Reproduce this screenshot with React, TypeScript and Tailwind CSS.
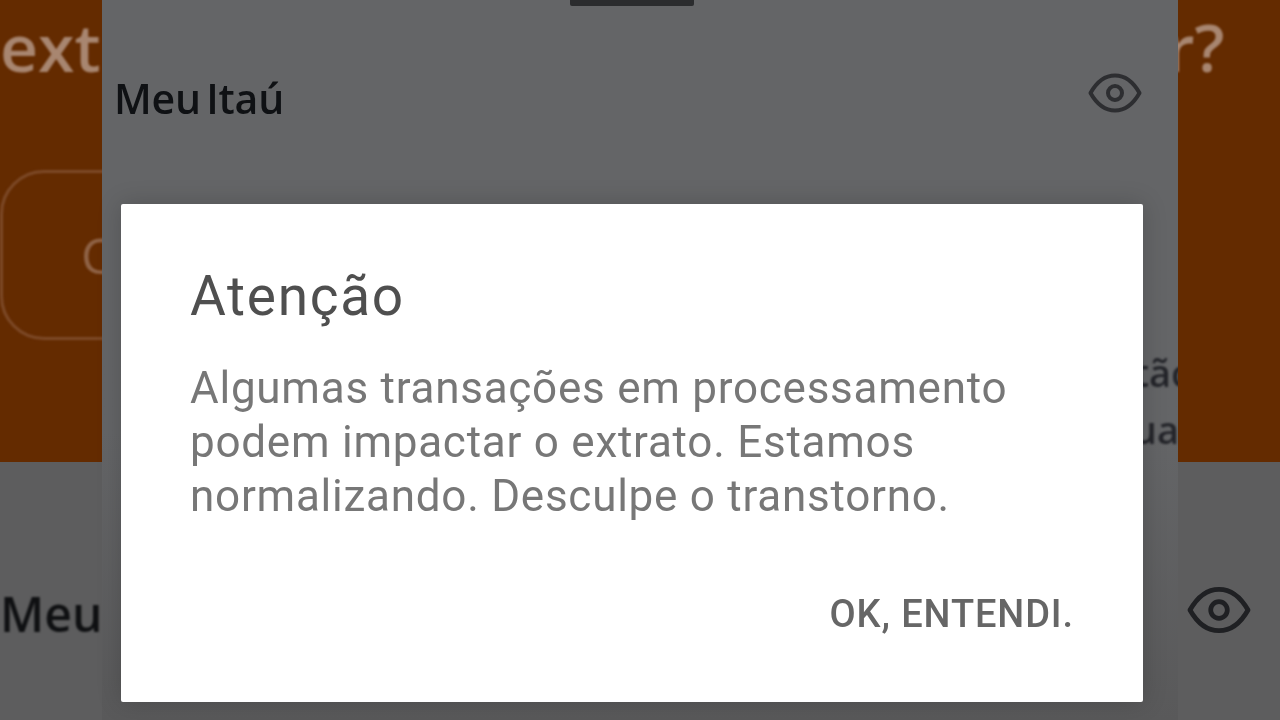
const roboto = "font-['Roboto',sans-serif]";
const openSans = "font-['Open_Sans',sans-serif]";

function EyeIcon({ className }: { className: string }) {
  return (
    <svg className={className} viewBox="0 0 54 40" fill="none" stroke="currentColor" strokeWidth="4">
      <path d="M2.500 20C9 8.500 17.500 2.500 27 2.500S45 8.500 51.500 20C45 31.500 36.500 37.500 27 37.500S9 31.500 2.500 20Z" strokeLinejoin="round" />
      <circle cx="27" cy="20" r="7" />
    </svg>
  );
}

export default function App() {
  return (
    <div className={`relative flex h-[720px] w-[1280px] overflow-hidden bg-[#5d5d5e] ${openSans}`}>
      {/* Left edge of the page behind the sheet */}
      <div className="flex w-[102px] shrink-0 flex-col overflow-hidden">
        <div className="h-[462px] overflow-hidden bg-[#642b00] pt-[8px]">
          <div className="w-[200px] text-[66px] leading-[76px] font-semibold text-[#a88670] blur-[1.2px]">ext</div>
          <div className="mt-[86px] flex h-[170px] w-[300px] items-center rounded-[44px] border-[3px] border-[#7d4a28] pl-[78px] text-[50px] text-[#8f6346] blur-[0.8px]">
            Consultar
          </div>
        </div>
        <div className="flex-1 overflow-hidden pt-[124px]">
          <div className="w-[300px] text-[48px] leading-[56px] font-semibold text-[#0f1012] blur-[0.8px]">Meu Itaú</div>
        </div>
      </div>

      {/* Sheet */}
      <div className="flex w-[1076px] shrink-0 flex-col overflow-hidden bg-gradient-to-b from-[#646567] from-60% to-[#59595a]">
        <div className="ml-[468px] h-[6px] w-[124px] rounded-b-[2px] bg-[#2b2c2e] blur-[0.5px]" />
        <div className="flex items-center justify-between pt-[65px] pr-[36px] pl-[12px]">
          <span className="text-[41px] leading-[54px] font-semibold tracking-[-0.2px] text-[#0f1114] blur-[0.7px] [word-spacing:-5px]">Meu Itaú</span>
          <EyeIcon className="-mt-[10px] h-[40px] w-[54px] text-[#2d2e31] blur-[0.5px]" />
        </div>
        <div className="mt-[226px] flex flex-col items-end gap-[15px] text-[38px] leading-[42px] font-semibold text-[#24252a] blur-[0.8px]">
          <span className="-mr-[12px]">tãc</span>
          <span className="-mr-[1px]">ua</span>
        </div>
      </div>

      {/* Right edge of the page behind the sheet */}
      <div className="flex w-[102px] shrink-0 flex-col overflow-hidden">
        <div className="h-[462px] overflow-hidden bg-[#642b00] pt-[8px]">
          <div className="text-[66px] leading-[76px] font-semibold whitespace-nowrap text-[#a88670] blur-[1.2px]">
            <span className="-ml-[12px]">r?</span>
          </div>
        </div>
        <div className="flex flex-1 justify-start pt-[124px] pl-[9px]">
          <EyeIcon className="h-[48px] w-[64px] text-[#1f2023] blur-[0.5px]" />
        </div>
      </div>

      {/* Dialog */}
      <div className={`absolute top-[204px] left-[121px] flex h-[498px] w-[1022px] flex-col rounded-[2px] bg-white pt-[58px] pr-[69px] pl-[69px] shadow-[0_0_24px_rgba(0,0,0,0.18)] ${roboto}`}>
        <h2 className="text-[55px] leading-[68px] font-normal tracking-[1.7px] text-[#4f4f4f] blur-[0.6px]">Atenção</h2>
        <p className="mt-[31px] text-[44px] leading-[54px] tracking-[0.75px] text-[#777777] blur-[0.6px]">
          Algumas transações em processamento
          <br />
          podem impactar o extrato. Estamos
          <br />
          normalizando. Desculpe o transtorno.
        </p>
        <div className="mt-[69px] text-right text-[38px] leading-[44px] font-medium tracking-[0.9px] text-[#666666] blur-[0.6px]">OK, ENTENDI.</div>
      </div>
    </div>
  );
}
